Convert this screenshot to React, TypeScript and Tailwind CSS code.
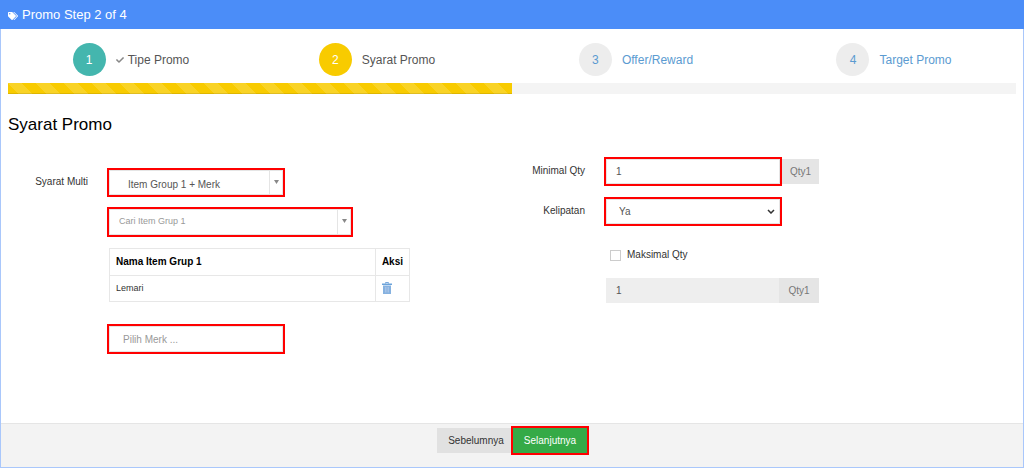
import { useState, type ReactNode } from "react";
import { FaCheck, FaTags } from "react-icons/fa";

interface Step {
  label: string;
  state: "done" | "active" | "todo";
}

const steps: Step[] = [
  { label: "Tipe Promo", state: "done" },
  { label: "Syarat Promo", state: "active" },
  { label: "Offer/Reward", state: "todo" },
  { label: "Target Promo", state: "todo" },
];

const circleStyles = {
  done: "bg-[#44b6ae] text-white",
  active: "bg-[#f8cb00] text-white",
  todo: "bg-[#ededed] text-[#5b9bd1]",
};

function StepItem({ step, number }: { step: Step; number: number }) {
  return (
    <a
      href={`#step-${number}`}
      className="flex items-center justify-center gap-[10px] text-xs"
    >
      <span
        className={`flex size-[33px] items-center justify-center rounded-full ${circleStyles[step.state]}`}
      >
        {number}
      </span>
      <span
        className={`flex items-center gap-1 ${
          step.state === "todo" ? "text-[#5b9bd1]" : "text-[#555]"
        }`}
      >
        {step.state === "done" && <FaCheck className="size-2 text-[#888]" />}
        {step.label}
      </span>
    </a>
  );
}

function Frame({
  className,
  children,
}: {
  className: string;
  children: ReactNode;
}) {
  return (
    <div className={`relative border-2 border-[#f00] bg-white ${className}`}>
      {children}
    </div>
  );
}

// Small triangle in its own cell at the right end of a search select
function SelectArrow() {
  return (
    <span className="pointer-events-none absolute inset-y-0 right-0 flex w-[14px] items-start justify-center border-l border-[#e5e5e5] pt-[10px]">
      <svg viewBox="0 0 5 4" className="h-1 w-[5px]">
        <path d="M0 0h5L2.5 4z" fill="#888" />
      </svg>
    </span>
  );
}

function TrashIcon() {
  return (
    <svg viewBox="0 0 10 12" className="h-3 w-[10px]">
      <path d="M3.5 1.5V.5h3v1" fill="none" stroke="#78a8dc" />
      <path d="M0 1.5h10V3H0z" fill="#6ba3da" />
      <path d="M1 3.5h8V12H1z" fill="#86b2e0" />
      <path d="M3.5 5v5.5M5 5v5.5M6.5 5v5.5" stroke="#b4c9e8" strokeWidth=".7" />
    </svg>
  );
}

export default function App() {
  const [qty, setQty] = useState("1");
  const [hasMax, setHasMax] = useState(false);

  return (
    <div className="flex min-h-screen flex-col border border-[#a9c7fb] bg-white font-['Liberation_Sans',Arial,sans-serif] text-[10px] leading-[14px] text-[#333]">
      <header className="-mx-px -mt-px flex h-[29px] items-center gap-1 bg-[#4b8df8] px-2 text-[13px] text-white">
        <FaTags className="mt-[2px] size-[10px]" />
        <h1>Promo Step 2 of 4</h1>
      </header>

      <main className="flex-1 px-[7px] pt-[14px]">
        <nav className="grid grid-cols-[246fr_246fr_272fr_244fr]">
          {steps.map((step, i) => (
            <StepItem key={step.label} step={step} number={i + 1} />
          ))}
        </nav>

        {/* Progress */}
        <div className="mt-[7px] h-[11px] bg-[#f4f4f4]">
          <div className="h-full w-1/2 bg-[#f8cb00] bg-[linear-gradient(45deg,rgba(255,255,255,.15)_25%,transparent_25%,transparent_50%,rgba(255,255,255,.15)_50%,rgba(255,255,255,.15)_75%,transparent_75%,transparent)] bg-[size:28px_28px] shadow-[inset_0_-1px_0_rgba(0,0,0,.1)]" />
        </div>

        <h2 className="mt-5 text-[17px] leading-[22px] text-black">
          Syarat Promo
        </h2>

        <div className="grid grid-cols-2 pt-[21px]">
          {/* Item conditions */}
          <div className="flex gap-[19px] pt-[11px]">
            <label htmlFor="syarat" className="w-20 pt-[7px] text-right">
              Syarat Multi
            </label>
            <div>
              <Frame className="h-[29px] w-[178px]">
                <select
                  id="syarat"
                  className="size-full appearance-none border border-[#e5e5e5] pt-1 pl-[18px] text-[#555]"
                >
                  <option>Item Group 1 + Merk</option>
                </select>
                <SelectArrow />
              </Frame>
              <Frame className="mt-[10px] h-[30px] w-[246px]">
                <select
                  aria-label="Cari Item Grup 1"
                  className="size-full appearance-none border border-[#e5e5e5] pb-[2px] pl-[9px] text-[9px] text-[#999]"
                >
                  <option>Cari Item Grup 1</option>
                </select>
                <SelectArrow />
              </Frame>

              <table className="mt-[11px] ml-[2px] w-[301px] border-collapse text-left">
                <thead className="text-black">
                  <tr>
                    <th className="h-[27px] border border-[#e7e7e7] px-[6px]">
                      Nama Item Grup 1
                    </th>
                    <th className="w-[34px] border border-[#e7e7e7] px-[6px]">
                      Aksi
                    </th>
                  </tr>
                </thead>
                <tbody>
                  <tr>
                    <td className="h-[26px] border border-[#e7e7e7] px-[6px] pb-[2px] text-[9px]">
                      Lemari
                    </td>
                    <td className="border border-[#e7e7e7] px-[6px] pb-[2px]">
                      <button aria-label="Hapus Lemari" className="block">
                        <TrashIcon />
                      </button>
                    </td>
                  </tr>
                </tbody>
              </table>

              <Frame className="mt-[22px] h-[30px] w-[178px]">
                <input
                  aria-label="Merk"
                  placeholder="Pilih Merk ..."
                  className="size-full border border-[#e5e5e5] px-[13px] placeholder:text-[#999]"
                />
              </Frame>
            </div>
          </div>

          {/* Quantity rules */}
          <div className="grid auto-rows-min grid-cols-[73px_1fr] gap-x-[19px]">
            <label htmlFor="min-qty" className="pt-[7px] text-right">
              Minimal Qty
            </label>
            <div className="flex items-center">
              <Frame className="h-[29px] w-[178px]">
                <input
                  id="min-qty"
                  value={qty}
                  onChange={(e) => setQty(e.target.value)}
                  className="size-full border border-[#e5e5e5] px-[9px] text-[#555]"
                />
              </Frame>
              <span className="flex h-[25px] w-[37px] items-center justify-center bg-[#e5e5e5] text-[#777]">
                Qty1
              </span>
            </div>

            <label htmlFor="kelipatan" className="mt-[11px] pt-[7px] text-right">
              Kelipatan
            </label>
            <Frame className="mt-[11px] h-[29px] w-[178px]">
              <select
                id="kelipatan"
                className="size-full appearance-none border border-[#e5e5e5] px-3 text-[#555]"
              >
                <option>Ya</option>
                <option>Tidak</option>
              </select>
              <svg
                viewBox="0 0 8 5"
                className="pointer-events-none absolute top-[10px] right-[5px] h-[5px] w-2"
              >
                <path d="M1 1l3 3 3-3" fill="none" stroke="#333" strokeWidth="1.5" />
              </svg>
            </Frame>

            <label className="col-start-2 mt-[22px] flex items-center gap-[6px] pl-[6px]">
              <input
                type="checkbox"
                checked={hasMax}
                onChange={(e) => setHasMax(e.target.checked)}
                className="size-[11px] appearance-none border border-[#ccc] checked:bg-[#4b8df8]"
              />
              Maksimal Qty
            </label>
            <div className="col-start-2 mt-4 flex pl-[2px]">
              <input
                aria-label="Maksimal Qty"
                defaultValue="1"
                disabled={!hasMax}
                className="h-[25px] w-[173px] px-[10px] text-[#555] disabled:bg-[#eee]"
              />
              <span className="flex h-[25px] w-10 items-center justify-center bg-[#e5e5e5] text-[#777]">
                Qty1
              </span>
            </div>
          </div>
        </div>
      </main>

      <footer className="flex h-11 items-start justify-center border-t border-[#e5e5e5] bg-[#f3f3f3] pt-[2px] pl-[2px]">
        <button className="mt-[2px] h-[25px] w-[74px] bg-[#e1e1e1] pl-1 text-[#333]">
          Sebelumnya
        </button>
        <Frame className="h-[29px] w-[78px]">
          <button className="size-full bg-[#35aa47] text-white">
            Selanjutnya
          </button>
        </Frame>
      </footer>
    </div>
  );
}
